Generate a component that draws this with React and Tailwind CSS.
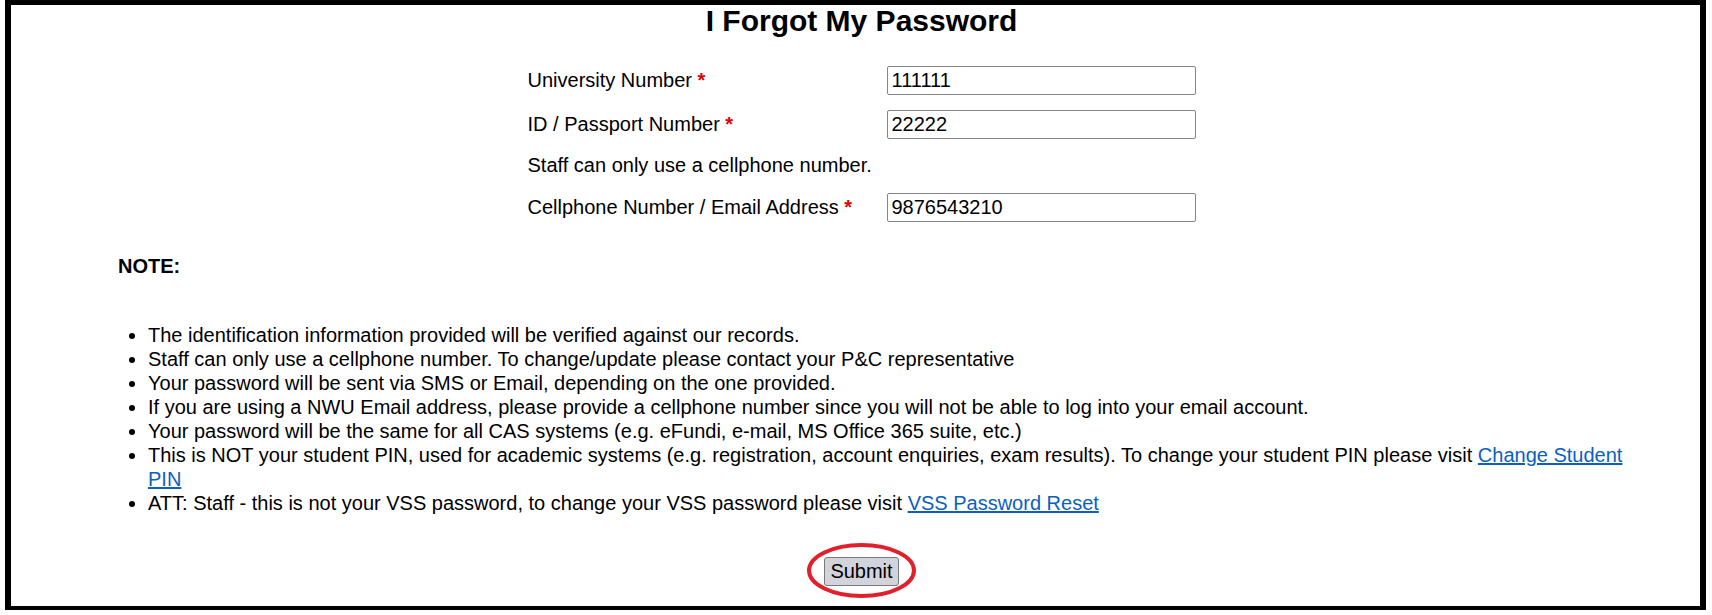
import React from 'react';

const FIELDS_TOP = [
  { label: 'University Number', value: '111111' },
  { label: 'ID / Passport Number', value: '22222' },
];

const NOTES = [
  'The identification information provided will be verified against our records.',
  'Staff can only use a cellphone number. To change/update please contact your P&C representative',
  'Your password will be sent via SMS or Email, depending on the one provided.',
  'If you are using a NWU Email address, please provide a cellphone number since you will not be able to log into your email account.',
  'Your password will be the same for all CAS systems (e.g. eFundi, e-mail, MS Office 365 suite, etc.)',
];

function Field({ label, value }) {
  return (
    <>
      <div className="h-[29px] flex items-center leading-[23px]">
        <span>
          {label} <span className="text-[#e00000] font-bold">*</span>
        </span>
      </div>
      <input
        type="text"
        defaultValue={value}
        className="w-[309px] h-[29px] border border-[#858585] rounded-[2px] px-[4px] text-[20px] leading-[23px] text-black outline-none"
      />
    </>
  );
}

export default function App() {
  return (
    <div className="w-[1712px] h-[615px] bg-white overflow-hidden pl-[5px] font-['Liberation_Sans',Arial,sans-serif] text-black text-[20px]">
      <div className="w-[1701px] h-[610px] border-black border-x-[6px] border-t-[5px] border-b-[4px] pl-[12px] flex flex-col">
        <h1 className="text-center text-[30px] font-bold leading-[32px]">I Forgot My Password</h1>

        {/* form */}
        <div className="mt-[29px] flex justify-center">
          <div className="grid grid-cols-[359px_309px] gap-y-[15px]">
            {FIELDS_TOP.map((f) => (
              <Field key={f.label} {...f} />
            ))}
            <div className="col-span-2 h-[24px] leading-[23px]">Staff can only use a cellphone number.</div>
            <Field label="Cellphone Number / Email Address" value="9876543210" />
          </div>
        </div>

        {/* notes */}
        <div className="mt-[33px] pl-[95px] font-bold leading-[23px]">NOTE:</div>
        <ul className="mt-[45px] pl-[125px] pr-[50px] list-disc list-outside leading-[24px]">
          {NOTES.map((n) => (
            <li key={n}>{n}</li>
          ))}
          <li>
            This is NOT your student PIN, used for academic systems (e.g. registration, account enquiries, exam results). To change your student PIN please visit{' '}
            <a href="#" className="text-[#0b5fc4] underline">Change Student PIN</a>
          </li>
          <li>
            ATT: Staff - this is not your VSS password, to change your VSS password please visit{' '}
            <a href="#" className="text-[#0b5fc4] underline">VSS Password Reset</a>
          </li>
        </ul>

        <div className="mt-[41px] flex justify-center">
          <div className="relative">
            <button className="h-[29px] px-[5px] border border-[#7a7a7a] rounded-[3px] bg-[#d3d3db] leading-[23px] text-[20px]">
              Submit
            </button>
            <svg
              className="absolute left-[-19px] top-[-15px] pointer-events-none"
              width="113"
              height="59"
              viewBox="0 0 113 59"
            >
              <ellipse cx="56.5" cy="29.5" rx="52.5" ry="25.5" fill="none" stroke="#e2202c" strokeWidth="4" />
            </svg>
          </div>
        </div>
      </div>
    </div>
  );
}
